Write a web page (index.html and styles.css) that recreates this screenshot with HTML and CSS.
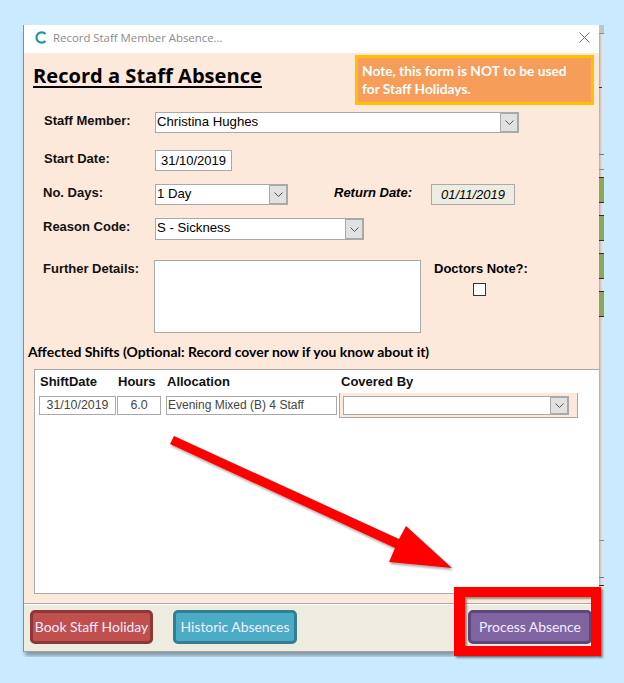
FILE: index.html
```html
<!DOCTYPE html>
<html lang="en">
<head>
  <meta charset="UTF-8">
  <title>Record Staff Member Absence</title>
  <link rel="stylesheet" href="styles.css">
</head>
<body>
  <div class="desktop">
    <div class="window">
      <div class="titlebar">
        <svg class="app-icon" width="12" height="13" viewBox="0 0 12 13">
          <path d="M10.5 3 A5.2 5.2 0 1 0 10.5 10" fill="none" stroke="#1a9aa0" stroke-width="2.2"/>
        </svg>
        <span class="title-text">Record Staff Member Absence...</span>
        <svg class="close-icon" width="11" height="11" viewBox="0 0 11 11">
          <path d="M0.5 0.5 L10.5 10.5 M10.5 0.5 L0.5 10.5" stroke="#777" stroke-width="1" fill="none"/>
        </svg>
      </div>

      <div class="content">
        <div class="top">
          <h1>Record a Staff Absence</h1>
          <div class="note">Note, this form is NOT to be used for Staff Holidays.</div>
        </div>

        <div class="form">
          <div class="row row-staff">
            <label class="lbl">Staff Member:</label>
            <div class="select select-staff"><span class="select-val">Christina Hughes</span><span class="drop"><svg width="9" height="5" viewBox="0 0 9 5"><path d="M0.5 0.5 L4.5 4.5 L8.5 0.5" fill="none" stroke="#555"/></svg></span></div>
          </div>
          <div class="row row-start">
            <label class="lbl">Start Date:</label>
            <div class="date">31/10/2019</div>
          </div>
          <div class="row row-days">
            <label class="lbl lbl-tight">No. Days:</label>
            <div class="select select-days"><span class="select-val">1 Day</span><span class="drop"><svg width="9" height="5" viewBox="0 0 9 5"><path d="M0.5 0.5 L4.5 4.5 L8.5 0.5" fill="none" stroke="#555"/></svg></span></div>
            <label class="lbl-return">Return Date:</label>
            <div class="return-val">01/11/2019</div>
          </div>
          <div class="row row-reason">
            <label class="lbl lbl-tight">Reason Code:</label>
            <div class="select select-reason"><span class="select-val">S - Sickness</span><span class="drop"><svg width="9" height="5" viewBox="0 0 9 5"><path d="M0.5 0.5 L4.5 4.5 L8.5 0.5" fill="none" stroke="#555"/></svg></span></div>
          </div>
          <div class="row row-details">
            <label class="lbl lbl-tight">Further Details:</label>
            <div class="textarea"></div>
            <div class="doctors">
              <label class="lbl-doctors">Doctors Note?:</label>
              <span class="checkbox"></span>
            </div>
          </div>
        </div>

        <div class="shifts-title">Affected Shifts (Optional: Record cover now if you know about it)</div>

        <div class="shifts">
          <div class="shifts-head">
            <span class="col-date">ShiftDate</span>
            <span class="col-hours">Hours</span>
            <span class="col-alloc">Allocation</span>
            <span class="col-cover">Covered By</span>
          </div>
          <div class="shifts-row">
            <span class="cell cell-date">31/10/2019</span>
            <span class="cell cell-hours">6.0</span>
            <span class="cell cell-alloc">Evening Mixed (B) 4 Staff</span>
            <div class="cover-cell">
              <div class="select select-cover"><span class="select-val"></span><span class="drop"><svg width="9" height="5" viewBox="0 0 9 5"><path d="M0.5 0.5 L4.5 4.5 L8.5 0.5" fill="none" stroke="#555"/></svg></span></div>
            </div>
          </div>
        </div>
      </div>

      <div class="footer">
        <button class="btn btn-red">Book Staff Holiday</button>
        <button class="btn btn-teal">Historic Absences</button>
        <button class="btn btn-purple">Process Absence</button>
      </div>
    </div>

    <!-- bit of the page behind the popup -->
    <div class="behind">
      <div class="mark mark-top"></div>
      <div class="mark mark-dark"></div>
      <div class="mark mark-blue"></div>
      <div class="mark mark-gray"></div>
      <div class="behind-bar bar-first"></div>
      <div class="behind-bar"></div>
      <div class="behind-bar"></div>
      <div class="behind-bar"></div>
      <div class="mark mark-gray-low"></div>
      <div class="mark mark-blue-low"></div>
      <div class="mark mark-red-low"></div>
    </div>
  </div>

  <!-- annotations drawn over the screenshot -->
  <svg class="arrow" width="624" height="683" viewBox="0 0 624 683">
    <defs>
      <filter id="soft" x="-10%" y="-10%" width="120%" height="120%">
        <feDropShadow dx="1" dy="2" stdDeviation="1" flood-color="#000" flood-opacity="0.35"/>
      </filter>
    </defs>
    <polygon filter="url(#soft)" fill="#ff0000" points="170,444 174,436 399,539 406,526 452,568 389,562 395,548"/>
  </svg>
  <div class="highlight"></div>
</body>
</html>
```

FILE: styles.css
```css
body {
  margin: 0;
  background-color: #caeaff;
  font-family: "Liberation Sans", Arial, sans-serif;
  color: #000;
}

.desktop {
  display: flex;
  align-items: flex-start;
  padding: 25px 0 0 23px;
}

.window {
  width: 575px;
  border-left: 1px solid #8e8e8e;
  box-shadow: 0 6px 4px -2px rgba(0, 0, 0, 0.35);
}

/* strip of the main page showing to the right of the window */
.behind {
  width: 5px;
  height: 632px;
  background: linear-gradient(to right, #a8a8a8, #d8d8d8 40%, #e6e8ea);
}

.mark {
  height: 1px;
}

.mark-top {
  height: 8px;
  background-color: #c4c4c4;
  border-bottom: 1px solid #8c8c8c;
}

.mark-dark {
  margin-top: 53px;
  background-color: #333;
  width: 3px;
}

.mark-blue {
  margin-top: 66px;
  background-color: #4a7fc0;
}

.mark-gray {
  margin-top: 14px;
  background-color: #8c8c8c;
}

.behind-bar {
  height: 26px;
  box-sizing: border-box;
  margin-top: 12px;
  background-color: #8aa85c;
  border-top: 1px solid #5a1a1a;
  border-bottom: 1px solid #5a1a1a;
}

.bar-first {
  margin-top: 7px;
}

.mark-gray-low {
  margin-top: 223px;
  background-color: #8c8c8c;
}

.mark-blue-low {
  margin-top: 36px;
  background-color: #4a7fc0;
}

.mark-red-low {
  margin-top: 7px;
  background-color: #5a1a1a;
}

/* title bar */
.titlebar {
  height: 28px;
  box-sizing: border-box;
  padding: 0 0 3px 11px;
  background: white;
  display: flex;
  align-items: center;
}

.app-icon {
  margin-right: 6px;
}

.title-text {
  font-family: "Open Sans", sans-serif;
  font-size: 11.4px;
  color: #8b8b8b;
}

.close-icon {
  margin-left: auto;
  margin-right: 9px;
}

.content {
  height: 551px;
  background-color: #fde9db;
  border-bottom: 1px solid #aaa;
  box-sizing: border-box;
  padding-left: 10px;
}

.top {
  display: flex;
  justify-content: space-between;
  padding-top: 2px;
  padding-right: 5px;
}

h1 {
  margin: 8px 0 0 -1px;
  font-family: "Open Sans", sans-serif;
  font-size: 20.1px;
  font-weight: 700;
  line-height: 26px;
  height: 23px;
  border-bottom: 2px solid #000;
}

.note {
  width: 239px;
  height: 50px;
  box-sizing: border-box;
  border: 3px solid #ffc000;
  background-color: #f79d5a;
  color: white;
  font-family: Lato, sans-serif;
  font-weight: 700;
  font-size: 13.75px;
  line-height: 18px;
  padding: 4px 4px;
}

.form {
  margin-top: 7px;
}

.row {
  display: flex;
  align-items: flex-start;
}

.row-start {
  margin-top: 17px;
}

.row-days {
  margin-top: 13px;
}

.row-reason {
  margin-top: 13px;
}

.row-details {
  margin-top: 20px;
}

.lbl {
  width: 121px;
  box-sizing: border-box;
  padding-left: 10px;
  margin-top: 1px;
  font-size: 13px;
  font-weight: 700;
  line-height: 15px;
  color: #111;
}

.lbl-tight {
  padding-left: 9px;
}

.select {
  display: flex;
  box-sizing: border-box;
  background: white;
  border: 1px solid #a9a9a9;
  height: 21px;
}

.select-val {
  flex: 1;
  font-size: 13.2px;
  line-height: 18px;
  padding-left: 1px;
}

.drop {
  width: 16px;
  background-color: #e1e1e1;
  border: 1px solid #a9a9a9;
  display: flex;
  align-items: center;
  justify-content: center;
}

.select-staff {
  width: 364px;
}

.select-days {
  width: 133px;
}

.select-reason {
  width: 209px;
  height: 22px;
}

.select-cover {
  width: 226px;
  height: 19px;
}

.date {
  width: 77px;
  height: 21px;
  box-sizing: border-box;
  background: white;
  border: 1px solid #a9a9a9;
  font-size: 13px;
  line-height: 19px;
  text-align: center;
}

.lbl-return {
  margin-left: 46px;
  width: 97px;
  font-size: 13px;
  font-weight: 700;
  font-style: italic;
  line-height: 15px;
  margin-top: 1px;
}

.return-val {
  width: 84px;
  height: 21px;
  box-sizing: border-box;
  background-color: #eeebe0;
  border: 1px solid #a9a9a9;
  font-size: 13px;
  font-style: italic;
  line-height: 19px;
  text-align: center;
}

.textarea {
  width: 267px;
  height: 73px;
  box-sizing: border-box;
  margin-left: -1px;
  background: white;
  border: 1px solid #a9a9a9;
}

.doctors {
  margin-left: 13px;
  display: flex;
  flex-direction: column;
  align-items: center;
}

.lbl-doctors {
  font-size: 13px;
  font-weight: 700;
  line-height: 15px;
  margin-top: 1px;
}

.checkbox {
  width: 13px;
  height: 13px;
  box-sizing: border-box;
  margin: 7px 2px 0 0;
  background: white;
  border: 1px solid #333;
}

.shifts-title {
  margin: 11px 0 0 -6px;
  font-family: Lato, sans-serif;
  font-size: 13.95px;
  font-weight: 700;
  line-height: 16px;
}

.shifts {
  margin-top: 9px;
  height: 225px;
  box-sizing: border-box;
  background: white;
  border: 1px solid #a9a9a9;
  border-right: none;
}

.shifts-head {
  display: flex;
  font-size: 13px;
  font-weight: 700;
  line-height: 16px;
  padding-top: 4px;
  color: #111;
}

.col-date {
  margin-left: 5px;
  width: 78px;
}

.col-hours {
  width: 49px;
}

.col-alloc {
  width: 174px;
}

.shifts-row {
  display: flex;
  align-items: flex-start;
  margin-top: 3px;
  padding-left: 4px;
}

.cell {
  height: 19px;
  box-sizing: border-box;
  margin-top: 3px;
  border: 1px solid #a9a9a9;
  font-size: 12px;
  line-height: 17px;
  color: #444;
}

.cell-date {
  width: 77px;
  font-size: 12.4px;
  text-align: center;
}

.cell-hours {
  width: 44px;
  margin-left: 1px;
  font-size: 12.4px;
  text-align: center;
}

.cell-alloc {
  width: 171px;
  margin-left: 5px;
  padding-left: 1px;
}

.cover-cell {
  width: 239px;
  height: 25px;
  box-sizing: border-box;
  margin-left: 2px;
  padding: 3px 0 0 3px;
  background-color: #fde9db;
  border-left: 1px solid #a9a9a9;
  border-right: 1px solid #a9a9a9;
  border-bottom: 1px solid #a9a9a9;
}

.footer {
  height: 48px;
  background-color: #eeebe0;
  border-top: 1px solid white;
  border-bottom: 1px solid #a0a0a0;
  box-sizing: border-box;
  display: flex;
  align-items: flex-start;
  padding: 5px 7px 0 6px;
}

.btn {
  height: 34px;
  border-radius: 5px;
  border: 3px solid;
  color: #f4ecff;
  font-family: Lato, sans-serif;
  font-size: 13.9px;
  padding: 0 0 2px;
  width: 124px;
}

.btn-red {
  width: 123px;
  background-color: #c0504d;
  border-color: #8c3836;
}

.btn-teal {
  margin-left: 20px;
  background-color: #4bacc6;
  border-color: #357d91;
}

.btn-purple {
  margin-left: auto;
  background-color: #8064a2;
  border-color: #5c4776;
}

/* red annotations */
.arrow {
  position: absolute;
  left: 0;
  top: 0;
}

.highlight {
  position: absolute;
  left: 454px;
  top: 587px;
  width: 147px;
  height: 69px;
  box-sizing: border-box;
  border: 10px solid #ff0000;
  border-left-width: 11px;
  box-shadow: 2px 2px 2px rgba(0, 0, 0, 0.4), inset 2px 2px 2px rgba(0, 0, 0, 0.4);
}
```
